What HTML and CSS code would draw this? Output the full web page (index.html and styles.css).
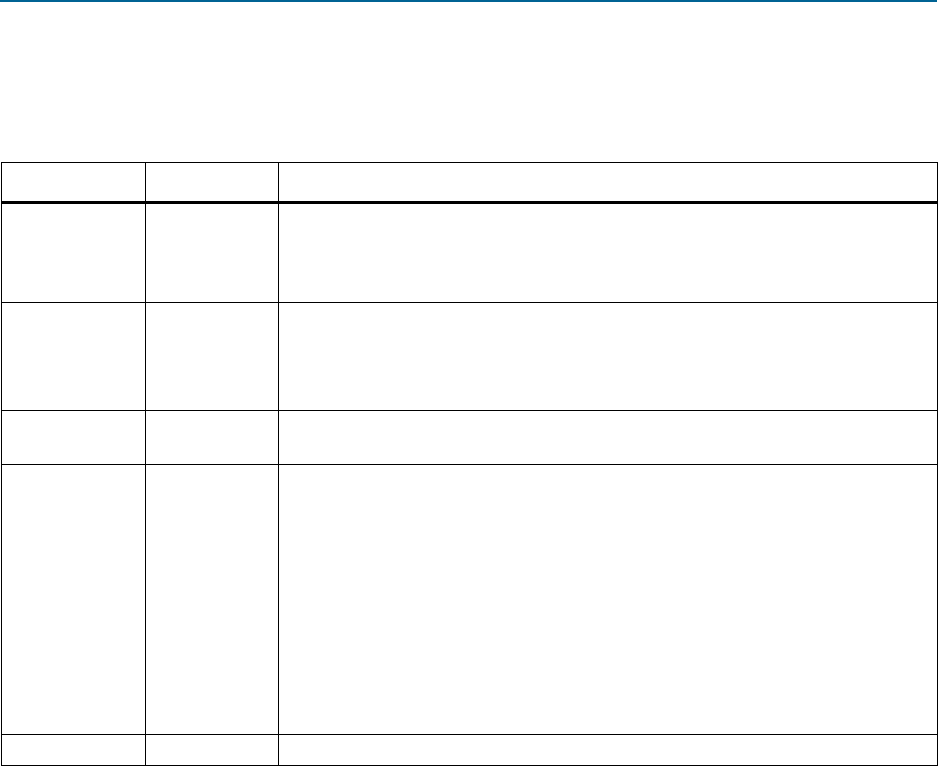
FILE: index.html
```html
<!DOCTYPE html>
<html lang="en">
<head>
<meta charset="utf-8">
<title>Table</title>
<link rel="stylesheet" href="styles.css">
</head>
<body>
<div class="topbar"></div>
<div class="grid" role="table">
  <div class="cell head" role="columnheader"></div>
  <div class="cell head" role="columnheader"></div>
  <div class="cell head" role="columnheader"></div>
  <div class="cell r1" role="cell"></div>
  <div class="cell r1" role="cell"></div>
  <div class="cell r1" role="cell"></div>
  <div class="cell r2" role="cell"></div>
  <div class="cell r2" role="cell"></div>
  <div class="cell r2" role="cell"></div>
  <div class="cell r3" role="cell"></div>
  <div class="cell r3" role="cell"></div>
  <div class="cell r3" role="cell"></div>
  <div class="cell r4" role="cell"></div>
  <div class="cell r4" role="cell"></div>
  <div class="cell r4" role="cell"></div>
  <div class="cell r5" role="cell"></div>
  <div class="cell r5" role="cell"></div>
  <div class="cell r5" role="cell"></div>
</div>
</body>
</html>
```

FILE: styles.css
```css
* { box-sizing: border-box; }
html, body { margin: 0; padding: 0; background: #fff; }
body { font-family: "Liberation Sans", Arial, sans-serif; }
.topbar {
  height: 2px;
  width: 937px;
  background: #006394;
}
.grid {
  margin-top: 160px;
  margin-left: 1px;
  display: grid;
  grid-template-columns: 144px 133px 659px;
  grid-template-rows: 41px 99px 108px 54px 270px 31px;
  width: 937px;
  border-left: 1px solid #000;
  border-top: 1px solid #000;
}
.cell {
  border-right: 1px solid #000;
  border-bottom: 1px solid #000;
}
.cell.head { border-bottom: 3px solid #000; }
```
